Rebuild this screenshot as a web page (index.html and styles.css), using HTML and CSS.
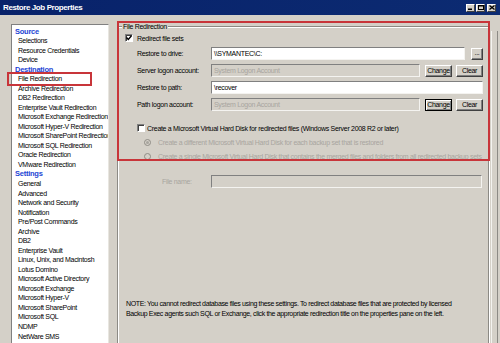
FILE: index.html
```html
<!DOCTYPE html>
<html>
<head>
<meta charset="utf-8">
<link rel="stylesheet" href="styles.css">
</head>
<body>
<div class="titlebar">
  <span class="title">Restore Job Properties</span>
  <div class="ctrls">
    <span class="ctrl"><svg width="5" height="5" viewBox="0 0 5 5"><rect x="0" y="3.5" width="4" height="1.5" fill="#000"/></svg></span>
    <span class="ctrl"><svg width="6" height="5" viewBox="0 0 6 5"><rect x="0.5" y="0.5" width="5" height="4" fill="none" stroke="#000"/><rect x="0" y="0" width="6" height="1.5" fill="#000"/></svg></span>
    <span class="ctrl close"><svg width="6" height="5" viewBox="0 0 6 5"><path d="M0.5 0.5L5.5 4.5M5.5 0.5L0.5 4.5" stroke="#000" stroke-width="1.3"/></svg></span>
  </div>
</div>
<div class="main">
  <ul class="tree">
    <li class="hd">Source</li>
    <li class="it">Selections</li>
    <li class="it">Resource Credentials</li>
    <li class="it">Device</li>
    <li class="hd">Destination</li>
    <li class="it">File Redirection</li>
    <li class="it">Archive Redirection</li>
    <li class="it">DB2 Redirection</li>
    <li class="it">Enterprise Vault Redirection</li>
    <li class="it">Microsoft Exchange Redirection</li>
    <li class="it">Microsoft Hyper-V Redirection</li>
    <li class="it">Microsoft SharePoint Redirection</li>
    <li class="it">Microsoft SQL Redirection</li>
    <li class="it">Oracle Redirection</li>
    <li class="it">VMware Redirection</li>
    <li class="hd">Settings</li>
    <li class="it">General</li>
    <li class="it">Advanced</li>
    <li class="it">Network and Security</li>
    <li class="it">Notification</li>
    <li class="it">Pre/Post Commands</li>
    <li class="it">Archive</li>
    <li class="it">DB2</li>
    <li class="it">Enterprise Vault</li>
    <li class="it">Linux, Unix, and Macintosh</li>
    <li class="it">Lotus Domino</li>
    <li class="it">Microsoft Active Directory</li>
    <li class="it">Microsoft Exchange</li>
    <li class="it">Microsoft Hyper-V</li>
    <li class="it">Microsoft SharePoint</li>
    <li class="it">Microsoft SQL</li>
    <li class="it">NDMP</li>
    <li class="it">NetWare SMS</li>
  </ul>
  <fieldset class="group">
    <legend>File Redirection</legend>
    <div class="chkrow">
      <span class="chk"><svg width="6" height="6" viewBox="0 0 6 6"><path d="M0.5 2.5L2.3 4.4L5.5 0.8" fill="none" stroke="#000" stroke-width="1.4"/></svg></span>
      <span>Redirect file sets</span>
    </div>
    <div class="frow first">
      <span class="lbl">Restore to drive:</span>
      <span class="inp w-drive">\\SYMANTEC\C:</span>
      <span class="btn dots">...</span>
    </div>
    <div class="frow">
      <span class="lbl">Server logon account:</span>
      <span class="inp dis w-acct">System Logon Account</span>
      <span class="btn chg">Change</span>
      <span class="btn clr">Clear</span>
    </div>
    <div class="frow">
      <span class="lbl">Restore to path:</span>
      <span class="inp w-full">\recover</span>
    </div>
    <div class="frow">
      <span class="lbl">Path logon account:</span>
      <span class="inp dis w-acct">System Logon Account</span>
      <span class="btn chg focus">Change</span>
      <span class="btn clr">Clear</span>
    </div>
    <div class="vhdrow">
      <span class="chk"></span>
      <span>Create a Microsoft Virtual Hard Disk for redirected files (Windows Server 2008 R2 or later)</span>
    </div>
    <div class="radrow">
      <span class="rad on"></span>
      <span>Create a different Microsoft Virtual Hard Disk for each backup set that is restored</span>
    </div>
    <div class="radrow">
      <span class="rad"></span>
      <span>Create a single Microsoft Virtual Hard Disk that contains the merged files and folders from all redirected backup sets</span>
    </div>
    <div class="fnrow">
      <span class="fnlbl">File name:</span>
      <span class="inp dis w-fn"></span>
    </div>
    <p class="note">NOTE: You cannot redirect database files using these settings. To redirect database files that are protected by licensed<br>Backup Exec agents such SQL or Exchange, click the appropriate redirection title on the properties pane on the left.</p>
  </fieldset>
  <div class="edge"></div>
</div>
<div class="mark mark-tree"></div>
<div class="mark mark-group"></div>
</body>
</html>
```
FILE: styles.css
```css
* { box-sizing: border-box; margin: 0; padding: 0; }
html, body { width: 500px; height: 343px; overflow: hidden; }
body {
  background: #d4d0c8;
  font-family: "Liberation Sans", Arial, sans-serif;
  font-size: 7px;
  letter-spacing: -0.3px;
  color: #000;
  position: relative;
}
.titlebar {
  height: 15px;
  background: linear-gradient(to right, #08226a, #0c2b72);
  display: flex;
  align-items: center;
  padding: 0 4px 0 3px;
}
.title {
  flex: 1;
  color: #fff;
  font-weight: bold;
  font-size: 8px;
  letter-spacing: -0.4px;
}
.ctrls { display: flex; gap: 1px; }
.ctrl {
  width: 9px;
  height: 8px;
  background: #d4d0c8;
  border: 1px solid;
  border-color: #fff #404040 #404040 #fff;
  display: flex;
  align-items: center;
  justify-content: center;
}
.ctrl.close { margin-left: 1px; }
.main {
  display: flex;
  align-items: flex-start;
  height: 328px;
}
.tree {
  list-style: none;
  margin: 9px 0 0 11px;
  width: 98px;
  height: 330px;
  flex: none;
  background: #fff;
  border: 1px solid;
  border-color: #808080 #e8e6e0 #e8e6e0 #808080;
  overflow: hidden;
  padding: 1.5px 0 0 3px;
  line-height: 9.53px;
  white-space: nowrap;
}
.hd {
  color: #1e45d4;
  font-weight: bold;
  font-size: 7.5px;
  letter-spacing: -0.25px;
}
.it { padding-left: 3px; }
.group {
  margin: 6.5px 0 0 8px;
  width: 372px;
  height: 340px;
  flex: none;
  border: 1px solid #8c8a85;
  box-shadow: inset 1px 1px #fff, 1px 1px #fff;
  padding: 0;
  min-width: 0;
}
.group legend {
  margin-left: 4px;
  padding: 0 1px;
  line-height: 9.5px;
  background: #d4d0c8;
}
.chkrow {
  display: flex;
  align-items: center;
  height: 8px;
  margin-top: 3px;
  padding-left: 7px;
}
.chk {
  width: 8px;
  height: 8px;
  flex: none;
  background: #fff;
  border: 1px solid;
  border-color: #808080 #fff #fff #808080;
  box-shadow: inset 1px 1px #404040;
  display: flex;
  align-items: center;
  justify-content: center;
  margin-right: 4px;
}
.frow {
  display: flex;
  align-items: center;
  height: 13px;
  margin-top: 4px;
  padding-left: 19px;
}
.frow.first { margin-top: 5px; }
.lbl { width: 74px; flex: none; }
.inp {
  height: 13px;
  flex: none;
  background: #fff;
  border: 1px solid;
  border-color: #808080 #f4f3f0 #f4f3f0 #808080;
  padding-left: 2px;
  line-height: 11px;
  white-space: nowrap;
  overflow: hidden;
}
.inp.dis {
  background: #d4d0c8;
  color: #a8a59f;
}
.w-drive { width: 254px; }
.w-acct { width: 209px; }
.w-full { width: 272px; }
.w-fn { width: 271px; }
.btn {
  height: 12px;
  flex: none;
  background: #d4d0c8;
  border: 1px solid;
  border-color: #fff #404040 #404040 #fff;
  box-shadow: inset -1px -1px #808080;
  display: flex;
  align-items: center;
  justify-content: center;
  line-height: 1;
}
.btn.dots { width: 12px; margin-left: 6px; padding-bottom: 2px; }
.btn.chg { width: 27px; margin-left: 5px; }
.btn.clr { width: 27px; margin-left: 4px; }
.btn.focus {
  border-color: #000;
  box-shadow: inset 1px 1px #fff, inset -1px -1px #808080;
}
.vhdrow {
  display: flex;
  align-items: center;
  height: 14px;
  margin-top: 10px;
  padding-left: 19px;
  white-space: nowrap;
}
.vhdrow .chk { margin-right: 2px; }
.radrow {
  display: flex;
  align-items: center;
  height: 14px;
  padding-left: 26px;
  color: #a8a59f;
  white-space: nowrap;
}
.rad {
  width: 7px;
  height: 7px;
  flex: none;
  border-radius: 50%;
  border: 1px solid #8f8c86;
  background: #d4d0c8;
  margin-right: 7px;
  display: flex;
  align-items: center;
  justify-content: center;
}
.rad.on::after {
  content: "";
  width: 3px;
  height: 3px;
  border-radius: 50%;
  background: #a8a59f;
}
.fnrow {
  display: flex;
  align-items: center;
  height: 13px;
  margin-top: 12px;
  padding-left: 44px;
}
.fnlbl { width: 49px; flex: none; color: #a8a59f; }
.note {
  margin-top: 111px;
  padding-left: 8px;
  line-height: 9.5px;
  letter-spacing: -0.35px;
  white-space: nowrap;
}
.edge {
  margin: 16px 0 0 2px;
  width: 7px;
  height: 330px;
  flex: none;
  border-left: 1px solid #f4f3f0;
  border-right: 1px solid #8c8a85;
}
.mark {
  position: absolute;
  border: 2px solid #c8353a;
  pointer-events: none;
}
.mark-tree { left: 7px; top: 72px; width: 85px; height: 14px; }
.mark-group { left: 117px; top: 21px; width: 373px; height: 140px; }
```
